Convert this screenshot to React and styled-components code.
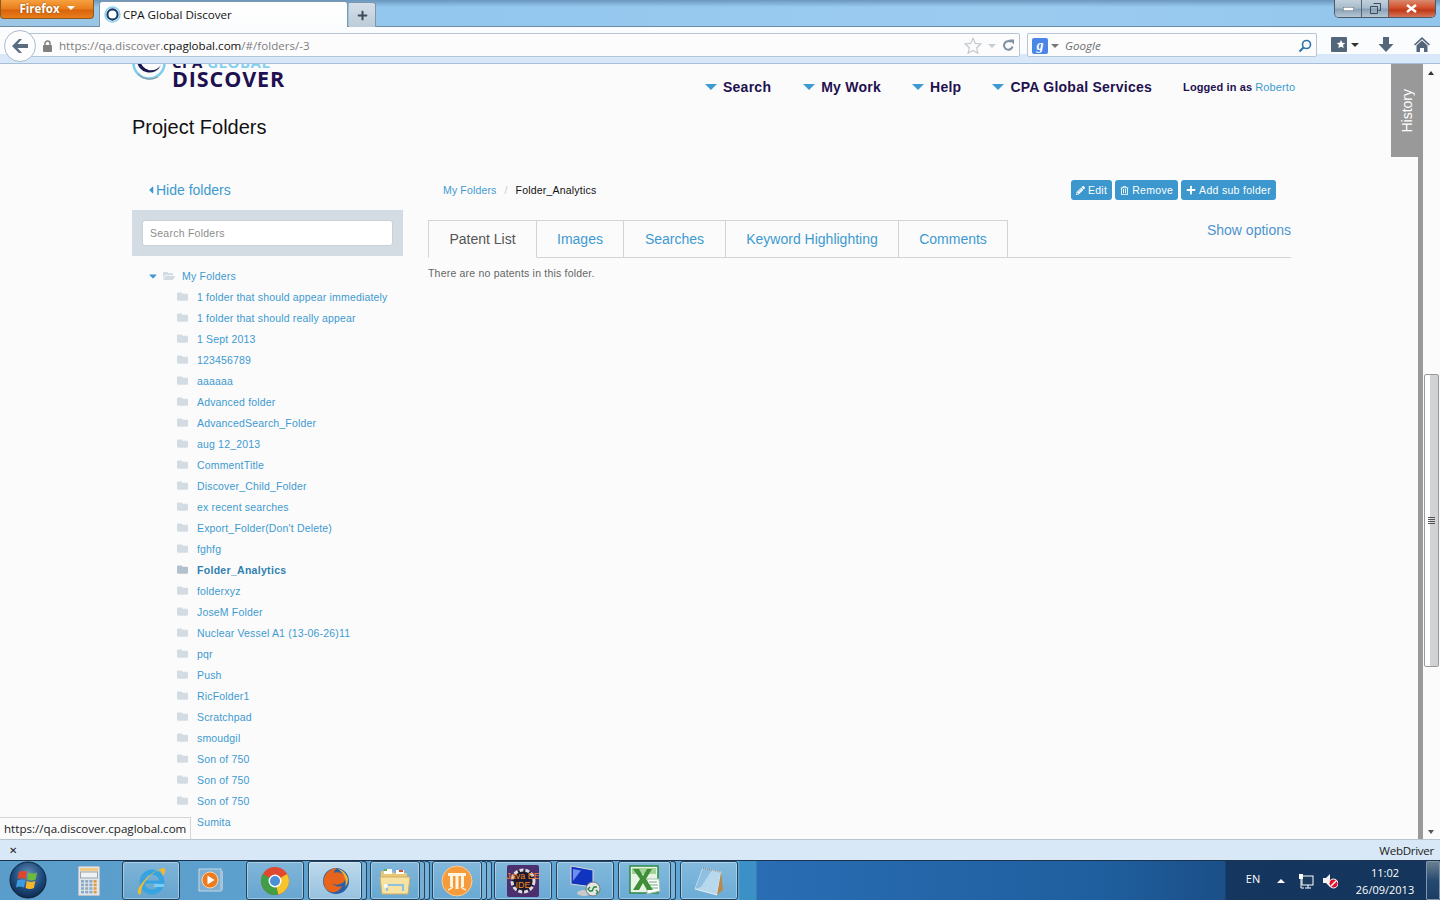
import React from "react"
import styled, { createGlobalStyle } from "styled-components"
import { FaPencilAlt, FaRegTrashAlt, FaPlus, FaFolder, FaFolderOpen, FaCaretDown, FaCaretLeft } from "react-icons/fa"

const GlobalStyle = createGlobalStyle`
  html, body {
    margin: 0;
    padding: 0;
    height: 100%;
    overflow: hidden;
    background: #fbfbfb;
  }
  * { box-sizing: border-box; }
`

const blue = "#3d9ad1"
const navy = "#1f1150"
const chromeFont = `"Open Sans", "Noto Sans", sans-serif`
const pageFont = `"Liberation Sans", Arial, sans-serif`

const Screen = styled.div`
  width: 1440px;
  height: 900px;
  display: flex;
  flex-direction: column;
  overflow: hidden;
  position: relative;
`

/* ---- browser title strip ---- */
const TitleBar = styled.div`
  height: 27px;
  flex: none;
  display: flex;
  align-items: flex-start;
  border-bottom: 1px solid #6d8ba5;
  background:
    linear-gradient(180deg, rgba(70, 110, 150, 0.55) 0, rgba(150, 200, 238, 0) 7px),
    linear-gradient(90deg, #9cc6e4 0, #93c7ee 30%, #9ccbf0 70%, #93c6ec 100%);
`

const FirefoxButton = styled.div`
  width: 94px;
  height: 19px;
  border-radius: 0 0 4px 4px;
  border: 1px solid #8d5b1c;
  border-top: 0;
  background: linear-gradient(180deg, #f7a13f 0, #e87d1c 50%, #d9640d 55%, #e87c1b 100%);
  color: #fff;
  font: 700 11.5px ${chromeFont};
  display: flex;
  align-items: center;
  justify-content: center;
  gap: 6px;
  padding-bottom: 2px;
  text-shadow: 0 0 2px #8a4a08;
`

const SmallCaret = styled.span`
  width: 0;
  height: 0;
  border-left: 4px solid transparent;
  border-right: 4px solid transparent;
  border-top: 4px solid ${(p) => p.$color || "#fff"};
  margin-left: ${(p) => p.$gap || 0}px;
`

const UpCaret = styled.span`
  width: 0;
  height: 0;
  border-left: 4px solid transparent;
  border-right: 4px solid transparent;
  border-bottom: 4px solid #fff;
`

const Tab = styled.div`
  width: 249px;
  height: 26px;
  margin: 1px 0 0 5px;
  background: linear-gradient(180deg, #fff 0, #fbfcfd 100%);
  border: 1px solid #7f97ac;
  border-bottom: 0;
  border-radius: 3px 3px 0 0;
  display: flex;
  align-items: center;
  gap: 2px;
  padding: 0 4px;
  font: 11.6px ${chromeFont};
  color: #111;
`

const NewTab = styled.div`
  width: 27px;
  height: 25px;
  margin: 2px 0 0 1px;
  background: linear-gradient(180deg, #d4dfe8 0, #bccbd8 100%);
  border: 1px solid #7f97ac;
  border-left: 0;
  border-bottom: 0;
  border-radius: 0 3px 0 0;
  color: #3d4c5c;
  display: flex;
  align-items: center;
  justify-content: center;
`

const WindowControls = styled.div`
  margin-left: auto;
  margin-right: 4px;
  width: 102px;
  height: 18px;
  display: flex;
  border: 1px solid #4c5a68;
  border-top: 0;
  border-radius: 0 0 5px 5px;
  overflow: hidden;
`

const WinButton = styled.div`
  width: ${(p) => p.$w}px;
  display: flex;
  align-items: center;
  justify-content: center;
  border-right: 1px solid #55626e;
  background: ${(p) =>
    p.$close
      ? "linear-gradient(180deg, #d98a70 0, #d3502c 45%, #bf3a17 60%, #d5765a 100%)"
      : "linear-gradient(180deg, #c2d0dc 0, #a8bccc 45%, #8aa2b5 55%, #b4c6d4 100%)"};
  &:last-child { border-right: 0; }
`

/* ---- navigation toolbar ---- */
const NavBar = styled.div`
  height: 37px;
  flex: none;
  display: flex;
  align-items: flex-start;
  padding: 6px 0 0 22px;
  position: relative;
  border-bottom: 1px solid #a9bfd8;
  background: linear-gradient(180deg, #fbfcfd 0, #fbfcfd 27px, #d8e8f8 27px, #d8e8f8 100%);
`

const BackButton = styled.div`
  position: absolute;
  left: 4px;
  top: 3px;
  width: 32px;
  height: 32px;
  border-radius: 50%;
  border: 1px solid #a9bccf;
  background: #fdfdfe;
  display: flex;
  align-items: center;
  justify-content: center;
`

const UrlBox = styled.div`
  height: 24px;
  padding-top: 1px;
  width: ${(p) => p.$w}px;
  margin-left: ${(p) => p.$ml || 0}px;
  border: 1px solid #b5c5d8;
  border-radius: 2px;
  background: #fcfcfd;
  display: flex;
  align-items: center;
  font: 11.6px ${chromeFont};
  color: #7d7d7d;
`

const LockWrap = styled.span`
  margin: 0 6px 0 19px;
  display: flex;
`

const UrlHost = styled.span`
  color: #111;
`

const UrlIcons = styled.div`
  margin-left: auto;
  display: flex;
  align-items: center;
  gap: 6px;
  padding-right: 4px;
`

const GoogleBadge = styled.span`
  width: 16px;
  height: 16px;
  margin: 0 3px 0 4px;
  background: #4a86e8;
  border-radius: 2px;
  color: #fff;
  font: italic 700 14px "Liberation Serif", serif;
  display: flex;
  align-items: center;
  justify-content: center;
`

const GoogleHint = styled.span`
  font-style: italic;
  color: #6e6e6e;
  margin-left: 6px;
`

const ToolIcons = styled.div`
  display: flex;
  align-items: center;
  margin-left: 14px;
  height: 23px;
`

const ToolIcon = styled.span`
  display: flex;
  align-items: center;
  width: ${(p) => p.$w}px;
`

/* ---- page area ---- */
const Viewport = styled.div`
  flex: 1;
  min-height: 0;
  display: flex;
  position: relative;
  background: #fbfbfb;
  font-family: ${pageFont};
`

const Page = styled.div`
  width: 1418px;
  flex: none;
  overflow: hidden;
  padding-left: 132px;
`

const Header = styled.header`
  height: 46px;
  width: 1170px;
  display: flex;
  align-items: flex-start;
  overflow: hidden;
`

const Logo = styled.div`
  width: 573px;
  display: flex;
  align-items: flex-start;
`

const LogoMarkWrap = styled.span`
  display: flex;
  margin-top: -18px;
`

const LogoWords = styled.div`
  margin: -9px 0 0 5px;
  display: flex;
  flex-direction: column;
`

const LogoTop = styled.div`
  font: 700 15px/14px "Open Sans", sans-serif;
  letter-spacing: 0.5px;
  color: #86d0f0;
  white-space: pre;
  span { color: ${navy}; }
`

const LogoName = styled.div`
  font: 700 21.5px/19px "Open Sans", sans-serif;
  color: ${navy};
  letter-spacing: 0.9px;
`

const Nav = styled.nav`
  display: flex;
  align-items: center;
  height: 46px;
  flex: 1;
`

const NavItem = styled.div`
  display: flex;
  align-items: center;
  font: 700 14px ${pageFont};
  letter-spacing: 0.25px;
  color: ${navy};
  margin-right: ${(p) => p.$mr}px;
  white-space: nowrap;
`

const NavArrow = styled.span`
  width: 0;
  height: 0;
  border-left: 6px solid transparent;
  border-right: 6px solid transparent;
  border-top: 6px solid ${blue};
  margin-right: 6px;
`

const Logged = styled.div`
  font: 700 11px ${pageFont};
  letter-spacing: 0.1px;
  color: ${navy};
  white-space: nowrap;
  span { font-weight: 400; color: ${blue}; }
`

const PageTitle = styled.h1`
  margin: 3px 0 0;
  height: 46px;
  font: 400 20px/28px ${pageFont};
  color: #111;
`

const Columns = styled.div`
  display: flex;
  margin-top: 14px;
`

const Sidebar = styled.aside`
  width: 271px;
  flex: none;
`

const HideLink = styled.div`
  height: 37px;
  padding: 7px 0 0 13px;
  font-size: 14px;
  line-height: 20px;
  color: ${blue};
  display: flex;
  align-items: flex-start;
  svg { margin: 4px -1px 0 0; }
`

const SearchPanel = styled.div`
  height: 46px;
  padding: 10px;
  background: #d3dce3;
`

const SearchInput = styled.div`
  height: 26px;
  background: #fff;
  border: 1px solid #ccd0d4;
  border-radius: 3px;
  padding: 0 7px;
  font-size: 10.5px;
  line-height: 24px;
  color: #8d8d8d;
  letter-spacing: 0.25px;
`

const Tree = styled.div`
  margin-top: 9px;
`

const RootRow = styled.div`
  height: 21px;
  display: flex;
  align-items: center;
  padding-left: 15px;
  font-size: 10.5px;
  letter-spacing: 0.2px;
  color: ${blue};
`

const RootFolder = styled.span`
  display: flex;
  margin: 0 7px 0 4px;
  color: #d3dce3;
`

const FolderRow = styled.div`
  height: 21px;
  display: flex;
  align-items: center;
  padding-left: 45px;
  font-size: 10.5px;
  font-weight: ${(p) => (p.$active ? 700 : 400)};
  letter-spacing: ${(p) => (p.$active ? "0.3px" : "0.17px")};
  color: ${(p) => (p.$active ? "#2f7fb0" : blue)};
  white-space: nowrap;
  svg {
    color: ${(p) => (p.$active ? "#b3c1cf" : "#d3dce3")};
    margin-right: 9px;
    flex: none;
  }
`

const Main = styled.main`
  width: 863px;
  margin-left: 25px;
  padding-top: 7px;
`

const TopRow = styled.div`
  height: 40px;
  display: flex;
  align-items: flex-start;
  padding: 0 15px 0 15px;
`

const Crumbs = styled.div`
  display: flex;
  height: 20px;
  align-items: center;
  font-size: 10.5px;
  color: ${blue};
  letter-spacing: 0.15px;
`

const CrumbSep = styled.span`
  color: #ccc;
  margin: 0 8px;
`

const CrumbNow = styled.span`
  color: #111;
  letter-spacing: 0.2px;
`

const Actions = styled.div`
  margin-left: auto;
  display: flex;
  gap: 3px;
`

const ActionButton = styled.button`
  height: 20px;
  border: 0;
  border-radius: 3px;
  background: #3b97cd;
  color: #fff;
  padding: 0 5px;
  display: flex;
  align-items: center;
  gap: 3px;
  font: 10.5px ${pageFont};
  letter-spacing: 0.3px;
  white-space: nowrap;
`

const TabRow = styled.div`
  height: 38px;
  display: flex;
  border-bottom: 1px solid #d4d4d4;
  position: relative;
`

const PageTab = styled.div`
  height: 38px;
  width: ${(p) => p.$w}px;
  display: flex;
  align-items: center;
  justify-content: center;
  font-size: 14px;
  color: ${(p) => (p.$active ? "#555" : blue)};
  border: 1px solid #d4d4d4;
  border-left-width: ${(p) => (p.$active ? 1 : 0)}px;
  border-bottom-color: ${(p) => (p.$active ? "#fbfbfb" : "#d4d4d4")};
  background: #fbfbfb;
`

const ShowOptions = styled.div`
  margin-left: auto;
  font-size: 14px;
  line-height: 20px;
  color: #4d94cf;
`

const EmptyNote = styled.p`
  margin: 9px 0 0;
  font-size: 10.5px;
  line-height: 13px;
  letter-spacing: 0.2px;
  color: #666;
`

const HistoryTab = styled.div`
  position: absolute;
  top: 0;
  left: 1391px;
  width: 32px;
  height: 93px;
  background: #999;
  color: #fff;
  display: flex;
  align-items: flex-start;
  justify-content: center;
  padding-top: 25px;
  padding-right: 1px;
  font-size: 14px;
  span {
    writing-mode: vertical-rl;
    transform: rotate(180deg);
  }
`

const Strip = styled.div`
  width: 5px;
  flex: none;
  background: #999;
`

const Scrollbar = styled.div`
  flex: 1;
  position: relative;
  background: #fbfbfb;
`

const ScrollArrow = styled.span`
  position: absolute;
  left: 5px;
  ${(p) => (p.$down ? "bottom: 5px;" : "top: 7px;")}
  width: 0;
  height: 0;
  border-left: 3.5px solid transparent;
  border-right: 3.5px solid transparent;
  ${(p) => (p.$down ? "border-top: 4px solid #555;" : "border-bottom: 4px solid #333;")}
`

const ScrollThumb = styled.div`
  position: absolute;
  left: 1px;
  top: 310px;
  width: 15px;
  height: 293px;
  border: 1px solid #9a9a9a;
  border-radius: 2px;
  background: linear-gradient(90deg, #fff 0, #fff 5px, #d0d2d5 5px, #d0d2d5 100%);
  display: flex;
  flex-direction: column;
  justify-content: center;
  align-items: center;
  gap: 1px;
`

const Grip = styled.span`
  width: 7px;
  height: 1px;
  background: #555;
`

const StatusTip = styled.div`
  position: absolute;
  left: 0;
  bottom: 0;
  height: 22px;
  width: 191px;
  background: #fbfbfb;
  border-top: 1px solid #d6d6d6;
  border-right: 1px solid #d6d6d6;
  padding-left: 4px;
  font: 11.6px/21px ${chromeFont};
  color: #222;
  white-space: nowrap;
`

/* ---- add-on bar ---- */
const AddonBar = styled.div`
  height: 21px;
  flex: none;
  background: #d9e8f7;
  border-top: 1px solid #b8c4d0;
  display: flex;
  align-items: center;
  justify-content: space-between;
  padding: 0 6px 0 9px;
  font: 11.6px ${chromeFont};
  color: #222;
`

const CloseMark = styled.span`
  font-size: 10px;
`

const AddonName = styled.span`
  letter-spacing: -0.3px;
`

/* ---- windows taskbar ---- */
const Taskbar = styled.div`
  height: 40px;
  flex: none;
  display: flex;
  align-items: stretch;
  border-top: 1px solid #1c3350;
  background: linear-gradient(90deg, #5a9dca 0, #62a7d4 738px, #3b90c6 740px, #3b90c6 756px, #2a6db3 757px, #1f5f9f 1100px, #1b4f88 1225px, #14365f 1226px, #15355c 100%);
  position: relative;
`

const Orb = styled.div`
  width: 38px;
  height: 38px;
  margin: 0 13px 0 9px;
  flex: none;
`

const TaskButton = styled.div`
  width: ${(p) => p.$w}px;
  margin-left: ${(p) => p.$ml || 0}px;
  padding-right: ${(p) => p.$pr || 0}px;
  flex: none;
  display: flex;
  align-items: center;
  justify-content: center;
  border-radius: 3px;
  ${(p) =>
    p.$plain
      ? ""
      : `border: 1px solid #23435f;
         box-shadow: inset 0 0 0 1px rgba(255,255,255,.35);
         background: linear-gradient(180deg, rgba(255,255,255,${p.$bright ? 0.6 : 0.22}) 0, rgba(255,255,255,${p.$bright ? 0.35 : 0.06}) 100%);`}
`

const StackEdge = styled.div`
  width: 5px;
  flex: none;
  margin-left: ${(p) => p.$ml || 0}px;
  border: 1px solid #23435f;
  border-left: 0;
  border-radius: 0 3px 3px 0;
  background: rgba(255, 255, 255, 0.15);
`

const Tray = styled.div`
  margin-left: auto;
  display: flex;
  align-items: center;
  color: #fff;
  font: 11px ${chromeFont};
`

const TrayItem = styled.span`
  display: flex;
  align-items: center;
  justify-content: center;
  width: ${(p) => p.$w}px;
  padding-bottom: ${(p) => p.$pb || 0}px;
`

const Clock = styled.div`
  width: 80px;
  text-align: center;
  line-height: 17px;
  padding-top: 1px;
`

const ShowDesktop = styled.div`
  width: 14px;
  height: 39px;
  margin-left: 1px;
  border: 1px solid #7f95aa;
  border-radius: 1px;
  background: linear-gradient(180deg, #6a7f90 0, #254a70 50%, #1c3d63 100%);
`

/* ---- drawn icons ---- */
const TabFavicon = () => (
  <svg width="17" height="17" viewBox="0 0 16 16">
    <circle cx="8" cy="8" r="7" fill="#fff" stroke="#8fd3f0" strokeWidth="1.600" />
    <circle cx="8" cy="8" r="4.800" fill="none" stroke="#1d3a66" strokeWidth="2" />
  </svg>
)

const LogoMark = () => (
  <svg width="35" height="35" viewBox="0 0 35 35">
    <circle cx="17" cy="17" r="15.500" fill="none" stroke="#7dcdf0" strokeWidth="2.500" />
    <path d="M5 14a12.500 12.500 0 0 0 24 5c-6 9-19 6-21-5z" fill="#1a1650" />
    <path d="M6 28a16 16 0 0 0 20 3" fill="none" stroke="#8b8b8b" strokeWidth="1" />
  </svg>
)

const BackArrow = () => (
  <svg width="18" height="16" viewBox="0 0 18 16">
    <path d="M8 1 1 8l7 7h3L6.500 10H17V6H6.500L11 1z" fill="#5a6d80" />
  </svg>
)

const Lock = () => (
  <svg width="11" height="12" viewBox="0 0 11 12">
    <path d="M3 5V3.500a2.500 2.500 0 0 1 5 0V5" fill="none" stroke="#808080" strokeWidth="1.500" />
    <rect x="1" y="5" width="9" height="7" rx="1" fill="#808080" />
  </svg>
)

const Star = ({ fill = "none", stroke = "#c3c8cd", size = 18 }) => (
  <svg width={size} height={size} viewBox="0 0 20 20">
    <path d="M10 1.500l2.600 5.600 6 .7-4.500 4.100 1.300 6L10 15l-5.400 2.900 1.300-6L1.400 7.800l6-.7z" fill={fill} stroke={stroke} strokeWidth="1.300" />
  </svg>
)

const Reload = () => (
  <svg width="13" height="13" viewBox="0 0 13 13">
    <path d="M10.500 7.500A4.300 4.300 0 1 1 9 3" fill="none" stroke="#7f8f9e" strokeWidth="2" />
    <path d="M7 0.500h5v5z" fill="#7f8f9e" />
  </svg>
)

const Magnifier = () => (
  <svg width="14" height="14" viewBox="0 0 14 14">
    <circle cx="8.500" cy="5.500" r="4" fill="none" stroke="#2f72a8" strokeWidth="1.600" />
    <path d="M5.500 8.500 1.500 12.500" stroke="#2f72a8" strokeWidth="2.200" />
  </svg>
)

const BookmarksIcon = () => (
  <svg width="16" height="15" viewBox="0 0 16 15">
    <rect width="16" height="15" rx="1" fill="#54677a" />
    <path d="M10 3l1.300 2.800 3 .3-2.300 2 .7 3L10 9.700 7.300 11l.7-3-2.300-2 3-.3z" fill="#fff" />
  </svg>
)

const DownArrow = () => (
  <svg width="16" height="15" viewBox="0 0 16 15">
    <path d="M5 0h6v7h4.500L8 15 .5 7H5z" fill="#54677a" />
  </svg>
)

const HomeIcon = () => (
  <svg width="16" height="15" viewBox="0 0 16 15">
    <path d="M8 0 0 7.500l1.200 1L8 2.300l6.800 6.200 1.200-1z" fill="#54677a" />
    <path d="M2.500 8.500 8 3.500l5.500 5V15H10v-4H6v4H2.500z" fill="#54677a" />
  </svg>
)

const WinOrb = () => (
  <svg width="38" height="38" viewBox="0 0 38 38">
    <defs>
      <radialGradient id="orb" cx="50%" cy="35%" r="65%">
        <stop offset="0" stopColor="#6d93b8" />
        <stop offset="0.6" stopColor="#1e4d80" />
        <stop offset="1" stopColor="#0f2a4d" />
      </radialGradient>
    </defs>
    <circle cx="19" cy="19" r="18" fill="url(#orb)" stroke="#0f2338" />
    <path d="M10 11q4-2 8 0l-1.300 7q-4-2-8 0z" fill="#e0462a" />
    <path d="M19.500 11.500q4 2 8.500 0l-1.300 7q-4 2-8.500 0z" fill="#6dbb3c" />
    <path d="M8.300 19.500q4-2 8 0L15 26.500q-4-2-8 0z" fill="#3f9be0" />
    <path d="M17.800 20q4 2 8.500 0L25 27q-4 2-8.500 0z" fill="#f5b72a" />
  </svg>
)

const CalcIcon = () => (
  <svg width="22" height="30" viewBox="0 0 22 30">
    <rect width="22" height="30" rx="1" fill="#dfe6ec" stroke="#8d9aa6" />
    <rect x="2" y="2" width="18" height="3" fill="#f0c987" />
    <rect x="2.500" y="6" width="17" height="6" fill="#eef2f5" stroke="#9aa5ae" />
    {[0, 1, 2, 3].map((r) =>
      [0, 1, 2, 3].map((c) => (
        <rect key={`${r}-${c}`} x={3 + c * 4.200} y={14 + r * 3.600} width="3" height="2.600" fill={c === 3 ? "#e79a3c" : "#8ea9c2"} />
      ))
    )}
  </svg>
)

const IeIcon = () => (
  <svg width="32" height="32" viewBox="0 0 32 32">
    <circle cx="17" cy="17" r="10" fill="none" stroke="#36a4e0" strokeWidth="5" />
    <rect x="9" y="15.500" width="17" height="3" fill="#36a4e0" />
    <rect x="19" y="19" width="10" height="3" fill="#7ccdf2" />
    <path d="M3 28C1 22 16 6 28 3c4 0 2 5 0 8-1-4-3-6-4-6C14 9 6 20 6 28c0 2-2 2-3 0z" fill="#f2b92c" />
  </svg>
)

const WmpIcon = () => (
  <svg width="28" height="26" viewBox="0 0 28 26">
    <rect x="2" y="1" width="22" height="22" fill="#7fb0d4" stroke="#c3d8e8" />
    <rect x="24" y="3" width="2" height="19" fill="#a7c3d7" />
    <circle cx="13" cy="12" r="8" fill="#ee7b1f" stroke="#f9d7a8" />
    <path d="M10.500 7.500v9l7-4.500z" fill="#fff" />
  </svg>
)

const ChromeIcon = () => (
  <svg width="30" height="30" viewBox="0 0 30 30">
    <circle cx="15" cy="15" r="14" fill="#e0482f" />
    <path d="M15 15 27.100 8a14 14 0 0 1-9 20.600z" fill="#f6c52c" />
    <path d="M15 15 18.100 28.600A14 14 0 0 1 2.900 8z" fill="#3f9e46" />
    <circle cx="15" cy="15" r="6.500" fill="#fff" />
    <circle cx="15" cy="15" r="5" fill="#4a8fd8" />
  </svg>
)

const FirefoxIcon = () => (
  <svg width="30" height="30" viewBox="0 0 30 30">
    <circle cx="16" cy="15" r="13" fill="#2a5fa8" />
    <path d="M4 18C2 9 10 2 17 2c-2 2-3 3-3 5 4-2 9 0 11 4 1 3-1 6-5 7-5 2-8-1-8-1 3 4 7 4 10 3-2 5-7 7-11 6-4-1-6-4-7-8z" fill="#e8641b" />
    <path d="M18 3c5 1 9 5 10 10 0 3-1 6-3 8 2-6 0-13-7-18z" fill="#f4b32c" />
  </svg>
)

const FolderIcon = () => (
  <svg width="32" height="28" viewBox="0 0 32 28">
    <path d="M2 4h11l2 2h13v5H2z" fill="#e8c877" />
    <rect x="5" y="2" width="8" height="5" fill="#fff" />
    <rect x="5" y="2" width="3" height="2" fill="#5fb04a" />
    <rect x="17" y="3" width="8" height="4" fill="#fff" />
    <rect x="20" y="3" width="4" height="2" fill="#d9542b" />
    <path d="M1 10h30l-2 17H3z" fill="#f6e3a4" stroke="#cfae62" />
    <path d="M8 24v-6h16v6" fill="none" stroke="#8fc0dc" strokeWidth="2" />
    <circle cx="7" cy="19" r="2" fill="#fff" />
  </svg>
)

const NinjaIcon = () => (
  <svg width="32" height="32" viewBox="0 0 32 32">
    <circle cx="16" cy="16" r="15" fill="#f59b3c" stroke="#f8cf9a" />
    <rect x="7" y="8" width="18" height="3" fill="#fff4e0" />
    <path d="M9 11h3v11H9zM14.500 11h3v13h-3zM20 11h3v11h-3z" fill="#fff4e0" />
    <path d="M7 25q3-1 5-3M25 25q-3-1-5-3" fill="none" stroke="#fff4e0" strokeWidth="1.500" />
  </svg>
)

const EclipseTile = styled.div`
  width: 32px;
  height: 32px;
  background: #4c2f6e;
  border-radius: 2px;
  position: relative;
  display: flex;
  align-items: center;
  justify-content: center;
`

const EclipseText = styled.span`
  position: absolute;
  font: 9px/9px "Liberation Sans", sans-serif;
  color: #f58a1f;
  text-align: center;
  white-space: nowrap;
`

const JavaIcon = () => (
  <EclipseTile>
    <svg width="30" height="30" viewBox="0 0 30 30">
      <circle cx="15" cy="15" r="11" fill="#1c1830" stroke="#ddd" strokeWidth="3" strokeDasharray="4 2" />
    </svg>
    <EclipseText>Java EE<br />IDE</EclipseText>
  </EclipseTile>
)

const RemoteIcon = () => (
  <svg width="32" height="32" viewBox="0 0 32 32">
    <path d="M2 1l22 4v17L2 19z" fill="#1034c0" stroke="#d8d8d8" />
    <path d="M4 4l8 1.500L4 16z" fill="#6f8cf0" />
    <ellipse cx="15" cy="28" rx="7" ry="3" fill="#c9c9c9" />
    <circle cx="24" cy="24" r="7" fill="#e6e6e6" stroke="#777" />
    <path d="M20 26h3l2-4h3M21 22l-2 2 2 2M27 25l2 2-2 2" fill="none" stroke="#1e8a3a" strokeWidth="1.400" />
  </svg>
)

const ExcelIcon = () => (
  <svg width="32" height="32" viewBox="0 0 32 32">
    <rect x="1" y="1" width="28" height="27" fill="#e9f3e4" stroke="#2a8a46" strokeWidth="1.500" />
    <path d="M3 3h24v6H3z" fill="#a6d29a" />
    <path d="M18 14h12l1 12-13 3z" fill="#fff" stroke="#9fbfa8" />
    <path d="M20 17h8M20 20h9M20 23h9" stroke="#6aa878" />
    <path d="M4 4h6l4 7 4-7h5l-6 10 7 11h-6l-4-7-4 7H4l7-11z" fill="#3f8f3a" />
  </svg>
)

const NotesIcon = () => (
  <svg width="32" height="30" viewBox="0 0 32 30">
    <path d="M10 2 28 6l-4 23-22-6z" fill="#b8d8ee" stroke="#e6eef4" />
    <path d="M10 2 19 4 8 21 2 23z" fill="#8fc0e0" />
    <path d="M28 6l2 18-6 5z" fill="#b88a4a" />
    <path d="M10 2 28 6" stroke="#888" strokeWidth="1.500" strokeDasharray="1 1" />
  </svg>
)

const NetworkIcon = () => (
  <svg width="16" height="16" viewBox="0 0 16 16">
    <rect x="4" y="3" width="11" height="9" fill="#1b3a5c" stroke="#fff" />
    <path d="M7 15h6M10 12v3" stroke="#fff" />
    <rect x="1" y="1" width="4" height="5" fill="#fff" />
    <path d="M3 6v9h3" stroke="#fff" fill="none" />
  </svg>
)

const SoundOff = () => (
  <svg width="16" height="16" viewBox="0 0 16 16">
    <path d="M1 5h3l4-4v13L4 10H1z" fill="#f2f2f2" />
    <circle cx="11.500" cy="10.500" r="4.500" fill="#e3102a" stroke="#fff" />
    <path d="M8.500 13.500l6-6" stroke="#fff" strokeWidth="1.500" />
  </svg>
)

const folders = [
  "1 folder that should appear immediately",
  "1 folder that should really appear",
  "1 Sept 2013",
  "123456789",
  "aaaaaa",
  "Advanced folder",
  "AdvancedSearch_Folder",
  "aug 12_2013",
  "CommentTitle",
  "Discover_Child_Folder",
  "ex recent searches",
  "Export_Folder(Don't Delete)",
  "fghfg",
  "Folder_Analytics",
  "folderxyz",
  "JoseM Folder",
  "Nuclear Vessel A1 (13-06-26)11",
  "pqr",
  "Push",
  "RicFolder1",
  "Scratchpad",
  "smoudgil",
  "Son of 750",
  "Son of 750",
  "Son of 750",
  "Sumita",
]

const tabs = [
  { label: "Patent List", width: 109 },
  { label: "Images", width: 87 },
  { label: "Searches", width: 102 },
  { label: "Keyword Highlighting", width: 173 },
  { label: "Comments", width: 109 },
]

const App = () => {
  return (
    <Screen>
      <GlobalStyle />
      <TitleBar>
        <FirefoxButton>
          Firefox
          <SmallCaret $gap={1} />
        </FirefoxButton>
        <Tab>
          <TabFavicon />
          CPA Global Discover
        </Tab>
        <NewTab>
          <FaPlus size={11} />
        </NewTab>
        <WindowControls>
          <WinButton $w={28}>
            <svg width="11" height="4"><rect width="11" height="4" fill="#fff" stroke="#556" /></svg>
          </WinButton>
          <WinButton $w={27}>
            <svg width="11" height="11"><path d="M3.500.5h7v7h-2M.5 3.500h7v7h-7z" fill="none" stroke="#3d4c5a" /></svg>
          </WinButton>
          <WinButton $w={47} $close>
            <svg width="11" height="9"><path d="M1 1l9 7M10 1L1 8" stroke="#fff" strokeWidth="2.400" /></svg>
          </WinButton>
        </WindowControls>
      </TitleBar>

      <NavBar>
        <BackButton><BackArrow /></BackButton>
        <UrlBox $w={998}>
          <LockWrap><Lock /></LockWrap>
          <span>https://qa.discover.<UrlHost>cpaglobal.com</UrlHost>/#/folders/-3</span>
          <UrlIcons>
            <Star />
            <SmallCaret $color="#c5ccd3" />
            <Reload />
          </UrlIcons>
        </UrlBox>
        <UrlBox $w={290} $ml={7}>
          <GoogleBadge>g</GoogleBadge>
          <SmallCaret $color="#777" />
          <GoogleHint>Google</GoogleHint>
          <UrlIcons><Magnifier /></UrlIcons>
        </UrlBox>
        <ToolIcons>
          <BookmarksIcon />
          <ToolIcon $w={31}><SmallCaret $color="#333" $gap={4} /></ToolIcon>
          <ToolIcon $w={36}><DownArrow /></ToolIcon>
          <ToolIcon $w={16}><HomeIcon /></ToolIcon>
        </ToolIcons>
      </NavBar>

      <Viewport>
        <Page>
          <Header>
            <Logo>
              <LogoMarkWrap><LogoMark /></LogoMarkWrap>
              <LogoWords>
                <LogoTop><span>CPA</span> GLOBAL</LogoTop>
                <LogoName>DISCOVER</LogoName>
              </LogoWords>
            </Logo>
            <Nav>
              <NavItem $mr={32}><NavArrow />Search</NavItem>
              <NavItem $mr={31}><NavArrow />My Work</NavItem>
              <NavItem $mr={31}><NavArrow />Help</NavItem>
              <NavItem $mr={31}><NavArrow />CPA Global Services</NavItem>
              <Logged>Logged in as <span>Roberto</span></Logged>
            </Nav>
          </Header>
          <PageTitle>Project Folders</PageTitle>
          <Columns>
            <Sidebar>
              <HideLink><FaCaretLeft size={12} />Hide folders</HideLink>
              <SearchPanel>
                <SearchInput>Search Folders</SearchInput>
              </SearchPanel>
              <Tree>
                <RootRow>
                  <FaCaretDown size={12} />
                  <RootFolder><FaFolderOpen size={12} /></RootFolder>
                  My Folders
                </RootRow>
                {folders.map((name, i) => (
                  <FolderRow key={i} $active={name === "Folder_Analytics"}>
                    <FaFolder size={11} />
                    {name}
                  </FolderRow>
                ))}
              </Tree>
            </Sidebar>
            <Main>
              <TopRow>
                <Crumbs>
                  My Folders
                  <CrumbSep>/</CrumbSep>
                  <CrumbNow>Folder_Analytics</CrumbNow>
                </Crumbs>
                <Actions>
                  <ActionButton><FaPencilAlt size={9} />Edit</ActionButton>
                  <ActionButton><FaRegTrashAlt size={9} />Remove</ActionButton>
                  <ActionButton><FaPlus size={10} />Add sub folder</ActionButton>
                </Actions>
              </TopRow>
              <TabRow>
                {tabs.map((t, i) => (
                  <PageTab key={t.label} $active={i === 0} $w={t.width}>{t.label}</PageTab>
                ))}
                <ShowOptions>Show options</ShowOptions>
              </TabRow>
              <EmptyNote>There are no patents in this folder.</EmptyNote>
            </Main>
          </Columns>
        </Page>
        <Strip />
        <Scrollbar>
          <ScrollArrow />
          <ScrollThumb>
            <Grip /><Grip /><Grip /><Grip />
          </ScrollThumb>
          <ScrollArrow $down />
        </Scrollbar>
        <HistoryTab><span>History</span></HistoryTab>
        <StatusTip>https://qa.discover.cpaglobal.com</StatusTip>
      </Viewport>

      <AddonBar>
        <CloseMark>✕</CloseMark>
        <AddonName>WebDriver</AddonName>
      </AddonBar>

      <Taskbar>
        <Orb><WinOrb /></Orb>
        <TaskButton $w={62} $pr={4} $plain><CalcIcon /></TaskButton>
        <TaskButton $w={58}><IeIcon /></TaskButton>
        <TaskButton $w={66} $pr={4} $plain><WmpIcon /></TaskButton>
        <TaskButton $w={58}><ChromeIcon /></TaskButton>
        <TaskButton $w={54} $ml={4} $bright><FirefoxIcon /></TaskButton>
        <StackEdge />
        <TaskButton $w={50} $ml={3}><FolderIcon /></TaskButton>
        <StackEdge /><StackEdge />
        <TaskButton $w={50} $ml={2}><NinjaIcon /></TaskButton>
        <StackEdge /><StackEdge />
        <TaskButton $w={58} $ml={2}><JavaIcon /></TaskButton>
        <TaskButton $w={58} $ml={4}><RemoteIcon /></TaskButton>
        <TaskButton $w={53} $ml={4}><ExcelIcon /></TaskButton>
        <StackEdge />
        <TaskButton $w={58} $ml={4}><NotesIcon /></TaskButton>
        <Tray>
          <TrayItem $w={24} $pb={5}>EN</TrayItem>
          <TrayItem $w={32}><UpCaret /></TrayItem>
          <TrayItem $w={18}><NetworkIcon /></TrayItem>
          <TrayItem $w={30}><SoundOff /></TrayItem>
          <Clock>11:02<br />26/09/2013</Clock>
          <ShowDesktop />
        </Tray>
      </Taskbar>
    </Screen>
  )
}

export default App
